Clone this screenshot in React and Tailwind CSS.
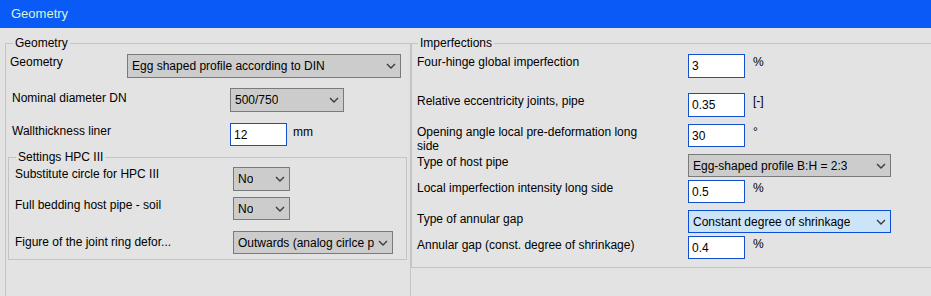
import React from 'react';

const Chevron = () => (
  <svg width="10" height="6" viewBox="0 0 10 6" className="shrink-0">
    <polyline points="1,1 5,5 9,1" fill="none" stroke="#3c3c3c" strokeWidth="1.4" />
  </svg>
);

const Dropdown = ({ value, width, active = false }) => (
  <div
    className={`flex h-full shrink-0 items-center justify-between overflow-hidden border pl-[4px] pr-[4px] whitespace-nowrap ${
      active ? 'border-[#0a4fd6] bg-[#cce4f7]' : 'border-[#7a7a7a] bg-[#cccccc]'
    }`}
    style={{ width }}
  >
    <span className="overflow-hidden">{value}</span>
    <Chevron />
  </div>
);

const Field = ({ value }) => (
  <input
    defaultValue={value}
    className="h-full w-[57px] shrink-0 border border-[#1350cf] bg-white px-[3px] text-[12px] text-black outline-none"
  />
);

const Row = ({ label, labelWidth, labelPad, labelTop = 1, height, mt, children, unit }) => (
  <div className="flex items-start" style={{ marginTop: mt, height }}>
    <div className="shrink-0 leading-[14px]" style={{ width: labelWidth, paddingLeft: labelPad, paddingTop: labelTop }}>
      {label}
    </div>
    {children}
    {unit && <span className="ml-[8px] pt-[1px] leading-[14px]">{unit}</span>}
  </div>
);

export default function App() {
  return (
    <div className="h-[296px] w-[931px] overflow-hidden bg-[#e3e3e3] font-['Liberation_Sans',Arial,sans-serif] text-[12px] text-black">
      <div className="h-[28px] bg-[#0a5af8] pl-[11px] text-[13px] leading-[28px] text-[#d2f6d2]">Geometry</div>

      <div className="mt-[8px] flex">
        {/* Left group */}
        <fieldset className="ml-[5px] h-[280px] w-[406px] min-w-0 shrink-0 border border-[#c4c4c4]">
          <legend className="ml-[7px] px-[2px] leading-[14px]">Geometry</legend>

          <Row label="Geometry" labelWidth={121} labelPad={4} labelTop={1} height={24} mt={4}>
            <Dropdown value="Egg shaped profile according to DIN" width={274} />
          </Row>
          <Row label="Nominal diameter DN" labelWidth={224} labelPad={6} labelTop={3} height={24} mt={10}>
            <Dropdown value="500/750" width={114} />
          </Row>
          <div className="flex items-start" style={{ marginTop: 11, height: 23 }}>
            <div className="w-[224px] shrink-0 pl-[6px] pt-[1px] leading-[14px]">Wallthickness liner</div>
            <Field value="12" />
            <span className="ml-[6px] pt-[2px] leading-[14px]">mm</span>
          </div>

          <fieldset className="ml-[2px] mt-[4px] h-[110px] w-[399px] min-w-0 border border-[#c4c4c4]">
            <legend className="ml-[7px] px-[2px] leading-[14px]">Settings HPC III</legend>
            <Row label="Substitute circle for HPC III" labelWidth={224} labelPad={6} labelTop={0} height={24} mt={3}>
              <Dropdown value="No" width={57} />
            </Row>
            <Row label="Full bedding host pipe - soil" labelWidth={224} labelPad={6} labelTop={1} height={23} mt={6}>
              <Dropdown value="No" width={57} />
            </Row>
            <Row label="Figure of the joint ring defor..." labelWidth={224} labelPad={6} labelTop={4} height={23} mt={11}>
              <Dropdown value="Outwards (analog cirlce p" width={160} />
            </Row>
          </fieldset>
        </fieldset>

        {/* Right group */}
        <fieldset className="h-[232px] w-[530px] min-w-0 shrink-0 border border-[#c4c4c4]">
          <legend className="ml-[6px] px-[2px] leading-[14px]">Imperfections</legend>

          <Row label="Four-hinge global imperfection" labelWidth={276} labelPad={5} height={24} mt={4} unit="%">
            <Field value="3" />
          </Row>
          <Row label="Relative eccentricity joints, pipe" labelWidth={276} labelPad={5} height={24} mt={15} unit="[-]">
            <Field value="0.35" />
          </Row>
          <div className="flex items-start" style={{ marginTop: 7, height: 23 }}>
            <div className="w-[276px] shrink-0 pl-[5px] pt-[1px] leading-[14px]">
              <div className="w-[232px]">Opening angle local pre-deformation long side</div>
            </div>
            <Field value="30" />
            <span className="ml-[8px] pt-[1px] leading-[14px]">°</span>
          </div>
          <Row label="Type of host pipe" labelWidth={276} labelPad={5} height={23} mt={7}>
            <Dropdown value="Egg-shaped profile B:H = 2:3" width={203} />
          </Row>
          <Row label="Local imperfection intensity long side" labelWidth={276} labelPad={5} height={23} mt={3} unit="%">
            <Field value="0.5" />
          </Row>
          <Row label="Type of annular gap" labelWidth={276} labelPad={5} labelTop={2} height={23} mt={7}>
            <Dropdown value="Constant degree of shrinkage" width={203} active />
          </Row>
          <Row label="Annular gap (const. degree of shrinkage)" labelWidth={276} labelPad={5} labelTop={2} height={23} mt={3} unit="%">
            <Field value="0.4" />
          </Row>
        </fieldset>
      </div>
    </div>
  );
}
